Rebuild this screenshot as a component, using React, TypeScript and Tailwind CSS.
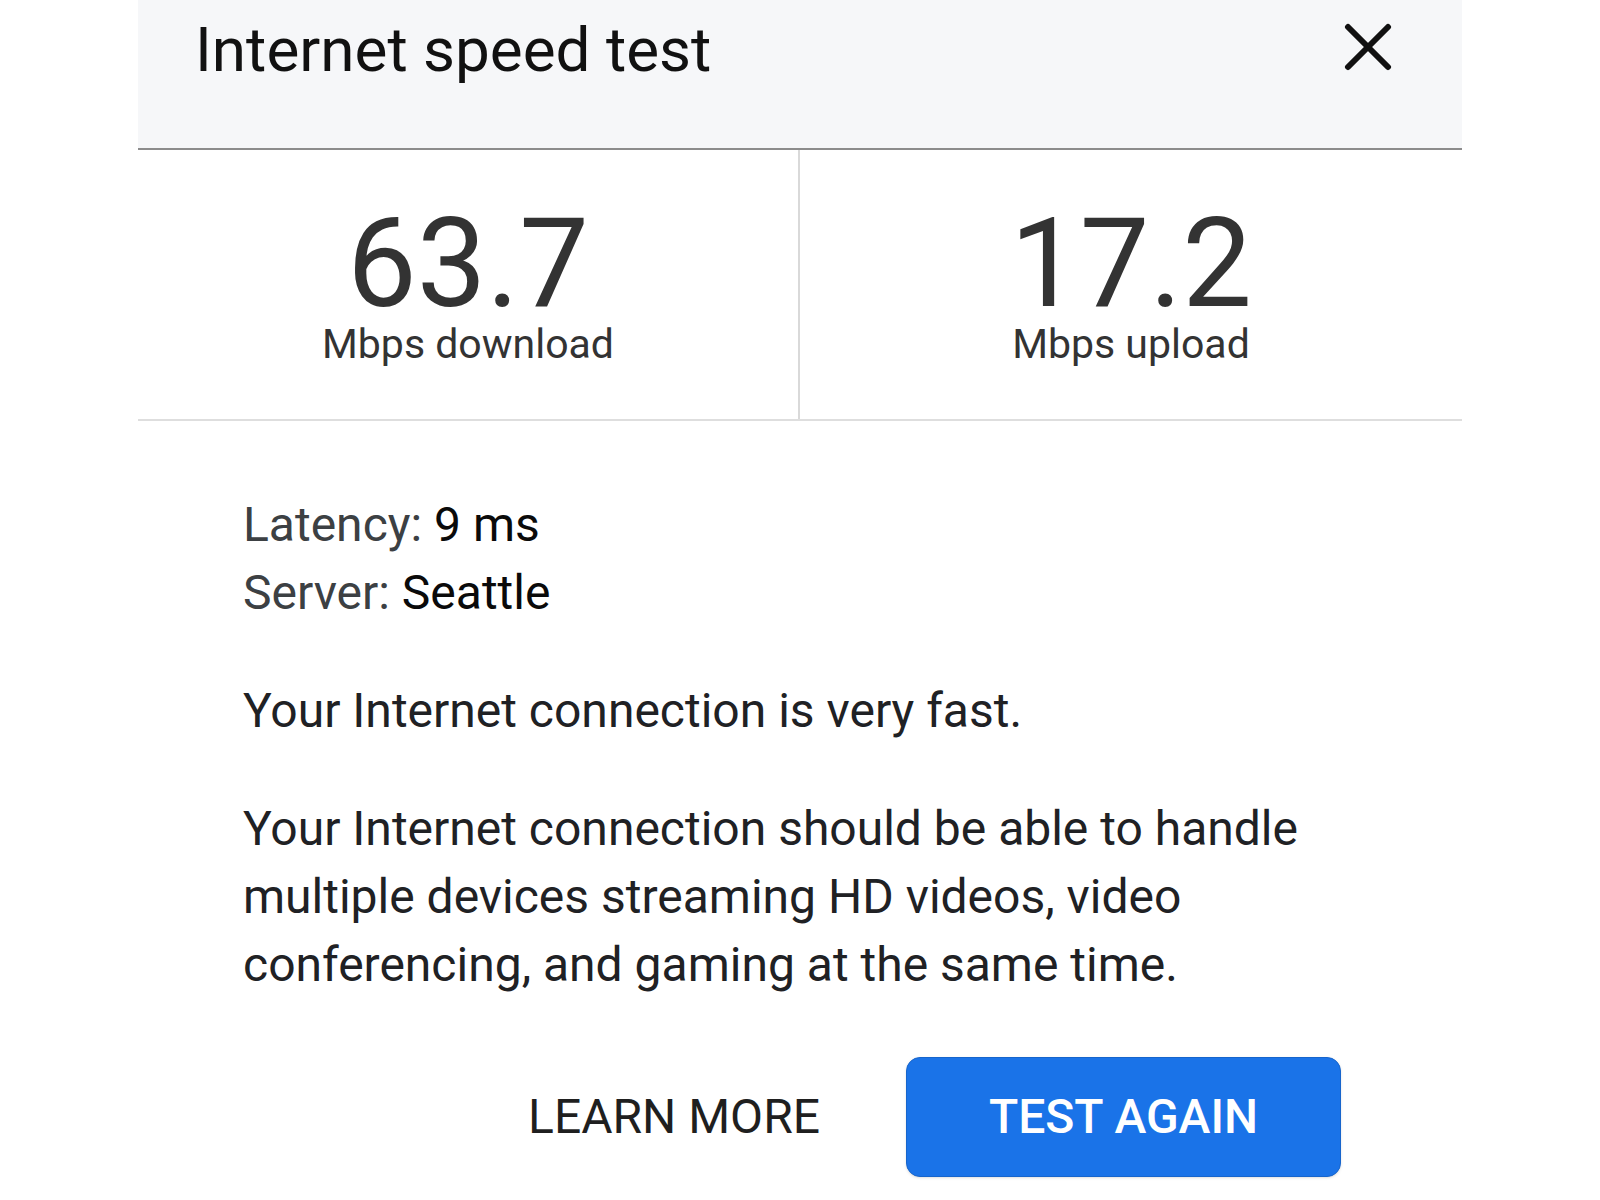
import React from "react";

const font = { fontFamily: "Roboto, 'Noto Sans', Arial, sans-serif" };

export default function App() {
  return (
    <div className="min-h-[1200px] w-[1600px] bg-white" style={font}>
      <div className="mx-auto w-[1324px]">
        {/* Header */}
        <div className="flex h-[150px] items-start justify-between border-b-2 border-[#8c8c8c] bg-[#f6f7f9] pl-[57px] pr-[70px]">
          <h1 className="mt-[14px] text-[62px] leading-[72px] font-normal text-[#111111]">
            Internet speed test
          </h1>
          <svg
            className="mt-[23px]"
            width="48"
            height="48"
            viewBox="0 0 48 48"
            fill="none"
            stroke="#111111"
            strokeWidth="6"
            strokeLinecap="round"
          >
            <line x1="4" y1="4" x2="44" y2="44" />
            <line x1="44" y1="4" x2="4" y2="44" />
          </svg>
        </div>

        {/* Stats */}
        <div className="grid h-[271px] grid-cols-[662px_1fr] border-b-2 border-[#dedede]">
          <div className="flex flex-col items-center border-r-2 border-[#d9d9d9] pt-[54px]">
            <div className="text-[124px] leading-[120px] text-[#333333]">63.7</div>
            <div className="text-[41px] leading-[40px] text-[#333333]">Mbps download</div>
          </div>
          <div className="flex flex-col items-center pt-[54px]">
            <div className="text-[124px] leading-[120px] text-[#333333]">17.2</div>
            <div className="text-[41px] leading-[40px] text-[#333333]">Mbps upload</div>
          </div>
        </div>

        {/* Body */}
        <div className="pl-[105px] pt-[70px] text-[48px] leading-[68px] text-[#202124]">
          <div>
            <span className="text-[#3c4043]">Latency: </span>
            <span className="text-[#0a0a0a]">9 ms</span>
          </div>
          <div>
            <span className="text-[#3c4043]">Server: </span>
            <span className="text-[#0a0a0a]">Seattle</span>
          </div>
          <p className="mt-[50px]">Your Internet connection is very fast.</p>
          <p className="mt-[50px]">
            Your Internet connection should be able to handle
            <br />
            multiple devices streaming HD videos, video
            <br />
            conferencing, and gaming at the same time.
          </p>
        </div>

        {/* Buttons */}
        <div className="mt-[58px] flex items-center justify-end gap-[46px] pr-[121px]">
          <button className="flex h-[120px] items-center px-[40px] text-[48px] font-normal text-[#1f1f1f]">
            LEARN MORE
          </button>
          <button className="flex h-[120px] w-[435px] items-center justify-center rounded-[14px] border border-[#1765cc] bg-[#1a73e8] text-[48px] font-medium text-white shadow-sm">
            TEST AGAIN
          </button>
        </div>
      </div>
    </div>
  );
}
